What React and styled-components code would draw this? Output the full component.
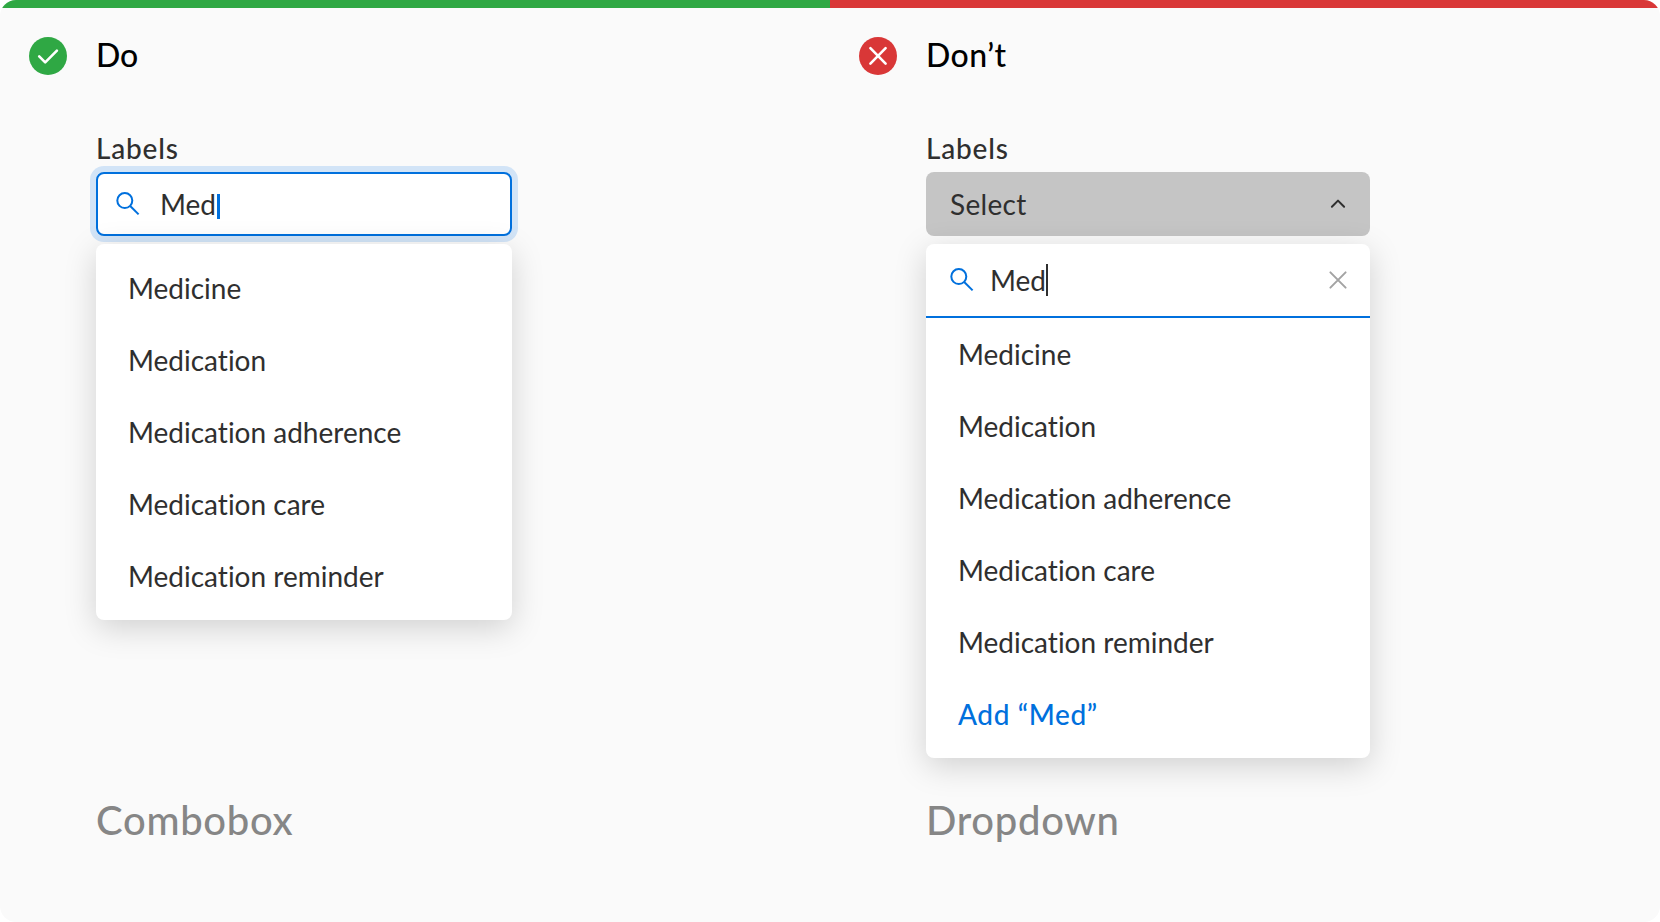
import React from "react";
import styled, { createGlobalStyle } from "styled-components";

const GlobalStyle = createGlobalStyle`
  *, *::before, *::after { box-sizing: border-box; }
  body {
    margin: 0;
    background: #fff;
    font-family: Lato, "Open Sans", sans-serif;
    font-variant-ligatures: none;
    color: #2f2f2f;
  }
`;

const Board = styled.main`
  display: grid;
  grid-template-columns: 1fr 1fr;
  width: 1660px;
  height: 922px;
  overflow: hidden;
  border-radius: 16px;
  background: #fafafa;
`;

const Column = styled.section`
  display: flex;
  flex-direction: column;
  border-top: 8px solid ${(p) => p.$accent};
`;

const Header = styled.header`
  display: flex;
  align-items: center;
  gap: 29px;
  height: 96px;
  padding-left: 29px;
`;

const Title = styled.h2`
  margin: 0;
  padding-bottom: 3px;
  font-size: 32px;
  line-height: 40px;
  font-weight: 500;
  letter-spacing: ${(p) => p.$tracking || 0}px;
  color: #000;
`;

const Example = styled.div`
  display: flex;
  flex-direction: column;
  width: ${(p) => p.$width}px;
  height: 650px;
  margin-left: 96px;
  padding-top: 27px;
`;

const Label = styled.div`
  flex: none;
  height: 41px;
  font-size: 28px;
  line-height: 34px;
  font-weight: 500;
  letter-spacing: 0.8px;
`;

const Field = styled.div`
  display: flex;
  align-items: center;
  flex: none;
  height: 64px;
  border-radius: 8px;
  font-size: 28px;
  line-height: 36px;
`;

const ComboField = styled(Field)`
  padding-left: 18px;
  border: 2px solid #0070dd;
  background: #fff;
  box-shadow: 0 0 0 6px #d2e4f7;
`;

const SelectField = styled(Field)`
  justify-content: space-between;
  padding: 0 24px;
  background: #c5c5c5;
`;

const Value = styled.span`
  letter-spacing: ${(p) => p.$tracking || 0}px;
  margin-left: ${(p) => p.$indent || 0}px;
`;

const Caret = styled.span`
  width: ${(p) => (p.$tall ? 2 : 3)}px;
  height: ${(p) => (p.$tall ? 32 : 25)}px;
  margin: ${(p) => (p.$tall ? "0" : "5px 0 0 1px")};
  background: ${(p) => (p.$tall ? "#2f2f2f" : "#0070dd")};
`;

const Menu = styled.div`
  flex: none;
  margin-top: 8px;
  padding: ${(p) => (p.$searchable ? "0 0 8px" : "8px 0")};
  border-radius: 8px;
  background: #fff;
  box-shadow: 0 8px 32px rgba(0, 0, 0, 0.17);
`;

const SearchBar = styled.div`
  display: flex;
  align-items: center;
  height: 74px;
  padding: 0 24px;
  border-bottom: 2px solid #0070dd;
  font-size: 28px;
  line-height: 36px;
`;

const ClearButton = styled.span`
  display: flex;
  margin-left: auto;
`;

const Option = styled.div`
  display: flex;
  align-items: center;
  height: 72px;
  padding: 0 32px;
  font-size: 28px;
  line-height: 36px;
  font-weight: ${(p) => (p.$action ? 500 : 400)};
  letter-spacing: ${(p) => (p.$action ? 0.6 : 0)}px;
  color: ${(p) => (p.$action ? "#0070dd" : "inherit")};
`;

const Caption = styled.h3`
  margin: 0 0 0 96px;
  padding-top: 42px;
  font-size: 40px;
  line-height: 48px;
  font-weight: 500;
  letter-spacing: 0.7px;
  color: #868686;
`;

const Icon = styled.svg`
  display: block;
  flex: none;
  overflow: visible;
  fill: none;
  stroke: ${(p) => p.$color};
  stroke-width: ${(p) => p.$stroke || 2};
  stroke-linecap: round;
  stroke-linejoin: round;
`;

const DoBadge = () => (
  <Icon width="38" height="38" $color="#fff" $stroke={2.6}>
    <circle cx="19" cy="19" r="19" fill="#2fa844" stroke="none" />
    <path d="M10.2 19.4L16.2 25.4L27.9 13.7" />
  </Icon>
);

const DontBadge = () => (
  <Icon width="38" height="38" $color="#fff" $stroke={2.6}>
    <circle cx="19" cy="19" r="19" fill="#d93737" stroke="none" />
    <path d="M11.4 11.2L26.6 26.6M26.6 11.2L11.4 26.6" />
  </Icon>
);

const SearchIcon = () => (
  <Icon width="24" height="24" $color="#0070dd">
    <circle cx="8.8" cy="8.6" r="7.5" />
    <path d="M14.2 14L22.6 22.4" strokeLinecap="butt" />
  </Icon>
);

const ChevronUp = () => (
  <Icon width="16" height="16" $color="#2f2f2f">
    <path d="M1.9 10.7L8 4.6L14.1 10.7" />
  </Icon>
);

const CrossIcon = () => (
  <Icon width="16" height="16" $color="#a3a3a3">
    <path d="M0.4 0.4L15.6 15.6M15.6 0.4L0.4 15.6" />
  </Icon>
);

const LABELS = [
  "Medicine",
  "Medication",
  "Medication adherence",
  "Medication care",
  "Medication reminder",
];

const Options = () => LABELS.map((label) => <Option key={label}>{label}</Option>);

export default function App() {
  return (
    <>
      <GlobalStyle />
      <Board>
        <Column $accent="#2fa844">
          <Header>
            <DoBadge />
            <Title>Do</Title>
          </Header>
          <Example $width={416}>
            <Label>Labels</Label>
            <ComboField>
              <SearchIcon />
              <Value $indent={20}>Med</Value>
              <Caret />
            </ComboField>
            <Menu>
              <Options />
            </Menu>
          </Example>
          <Caption>Combobox</Caption>
        </Column>
        <Column $accent="#d93737">
          <Header>
            <DontBadge />
            <Title $tracking={0.5}>Don’t</Title>
          </Header>
          <Example $width={444}>
            <Label>Labels</Label>
            <SelectField>
              <Value $tracking={0.3}>Select</Value>
              <ChevronUp />
            </SelectField>
            <Menu $searchable>
              <SearchBar>
                <SearchIcon />
                <Value $indent={16}>Med</Value>
                <Caret $tall />
                <ClearButton>
                  <CrossIcon />
                </ClearButton>
              </SearchBar>
              <Options />
              <Option $action>Add “Med”</Option>
            </Menu>
          </Example>
          <Caption>Dropdown</Caption>
        </Column>
      </Board>
    </>
  );
}
